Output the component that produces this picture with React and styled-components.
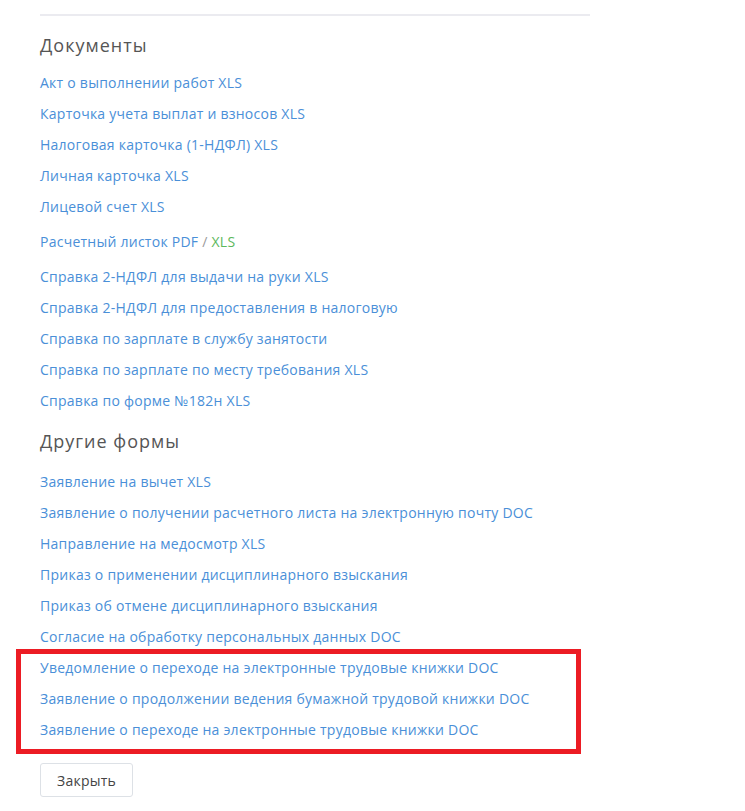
import React from 'react';
import styled, { createGlobalStyle } from 'styled-components';

const GlobalStyle = createGlobalStyle`
  body {
    margin: 0;
    background: #fff;
    font-family: "Open Sans", Roboto, Arial, sans-serif;
  }
`;

const Page = styled.div`
  width: 550px;
  padding: 14px 0 20px 40px;
`;

const Divider = styled.div`
  height: 2px;
  background: #ebebf0;
`;

const SectionTitle = styled.h3`
  margin: ${(p) => (p.first ? '17px 0 16px' : '18px 0 19px')};
  font-size: 18px;
  line-height: 24px;
  font-weight: 400;
  letter-spacing: 1px;
  color: #555;
`;

const LinkList = styled.div`
  display: flex;
  flex-direction: column;
  gap: 11px;
`;

const DocLink = styled.a`
  display: block;
  font-size: 14px;
  line-height: 20px;
  letter-spacing: 0.25px;
  color: #4a8fd8;
  text-decoration: none;
  margin: ${(p) => (p.spaced ? '4px 0' : '0')};
  cursor: pointer;
`;

const Slash = styled.span`
  color: #9a9a9a;
`;

const Green = styled.span`
  color: #5cb85c;
`;

const Highlighted = styled.div`
  position: relative;
  display: flex;
  flex-direction: column;
  gap: 11px;

  &::after {
    content: '';
    position: absolute;
    top: -9px;
    bottom: -14px;
    left: -24px;
    right: 9px;
    border: 5px solid #ec1c24;
    pointer-events: none;
  }
`;

const CloseButton = styled.button`
  margin-top: 23px;
  height: 34px;
  padding: 0 16px;
  background: #fff;
  border: 1px solid #dde1e6;
  border-radius: 3px;
  font-family: inherit;
  font-size: 14px;
  letter-spacing: 0.25px;
  color: #444;
  cursor: pointer;
`;

const documents = [
  'Акт о выполнении работ XLS',
  'Карточка учета выплат и взносов XLS',
  'Налоговая карточка (1-НДФЛ) XLS',
  'Личная карточка XLS',
  'Лицевой счет XLS',
];

const documentsAfter = [
  'Справка 2-НДФЛ для выдачи на руки XLS',
  'Справка 2-НДФЛ для предоставления в налоговую',
  'Справка по зарплате в службу занятости',
  'Справка по зарплате по месту требования XLS',
  'Справка по форме №182н XLS',
];

const otherForms = [
  'Заявление на вычет XLS',
  'Заявление о получении расчетного листа на электронную почту DOC',
  'Направление на медосмотр XLS',
  'Приказ о применении дисциплинарного взыскания',
  'Приказ об отмене дисциплинарного взыскания',
  'Согласие на обработку персональных данных DOC',
];

const highlighted = [
  'Уведомление о переходе на электронные трудовые книжки DOC',
  'Заявление о продолжении ведения бумажной трудовой книжки DOC',
  'Заявление о переходе на электронные трудовые книжки DOC',
];

const App = () => {
  return (
    <>
      <GlobalStyle />
      <Page>
        <Divider />
        <SectionTitle first>Документы</SectionTitle>
        <LinkList>
          {documents.map((t) => (
            <DocLink key={t}>{t}</DocLink>
          ))}
          <DocLink spaced>
            Расчетный листок PDF <Slash>/</Slash> <Green>XLS</Green>
          </DocLink>
          {documentsAfter.map((t) => (
            <DocLink key={t}>{t}</DocLink>
          ))}
        </LinkList>

        <SectionTitle>Другие формы</SectionTitle>
        <LinkList>
          {otherForms.map((t) => (
            <DocLink key={t}>{t}</DocLink>
          ))}
          <Highlighted>
            {highlighted.map((t) => (
              <DocLink key={t}>{t}</DocLink>
            ))}
          </Highlighted>
        </LinkList>

        <CloseButton>Закрыть</CloseButton>
      </Page>
    </>
  );
};

export default App;
